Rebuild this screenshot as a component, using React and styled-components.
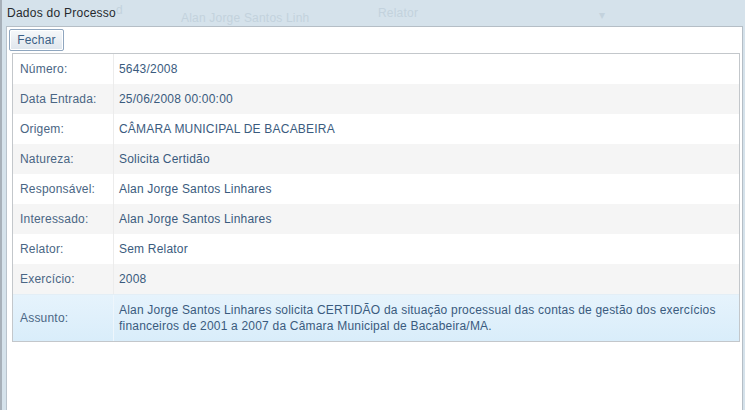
import React from "react";
import styled, { createGlobalStyle } from "styled-components";

const Global = createGlobalStyle`
  html, body { margin: 0; padding: 0; }
  body { font-family: "Liberation Sans", Arial, sans-serif; background: #fff; }
`;

const Window = styled.div`
  width: 745px;
  height: 410px;
  box-sizing: border-box;
  background: #d5e2eb;
  display: flex;
  flex-direction: column;
  border-left: 2px solid #a7b0b9;
  overflow: hidden;
`;

const Header = styled.div`
  height: 26px;
  flex: none;
  display: flex;
  align-items: center;
  padding-left: 5px;
  position: relative;
`;

const Title = styled.div`
  font-size: 12px;
  letter-spacing: 0.25px;
  color: #262a2e;
  position: relative;
  z-index: 1;
`;

const Ghost = styled.span`
  position: absolute;
  top: ${p => p.$top}px;
  left: ${p => p.$left}px;
  font-size: 12px;
  letter-spacing: 0.2px;
  color: #c3d2dd;
`;

const Body = styled.div`
  flex: 1;
  margin-left: 4px;
  margin-right: 2px;
  background: #fff;
  border-top: 1px solid #b5bec6;
  border-left: 1px solid #b9c3cc;
  border-right: 1px solid #b5bec6;
  padding: 2px 2px 0 2px;
  display: flex;
  flex-direction: column;
  align-items: flex-start;
`;

const Button = styled.button`
  width: 55px;
  height: 22px;
  border: 1px solid #8fa6bf;
  border-radius: 2px;
  background: linear-gradient(#f6f8fa, #dfe6ed);
  color: #3a5f86;
  font-family: "Liberation Sans", Arial, sans-serif;
  font-size: 12px;
  letter-spacing: 0.2px;
  padding: 0;
  box-shadow: inset 0 0 0 1px #fff;
`;

const Table = styled.div`
  margin-top: 2px;
  margin-left: 3px;
  align-self: stretch;
  border: 1px solid #c3c7cb;
  display: flex;
  flex-direction: column;
`;

const Row = styled.div`
  display: grid;
  grid-template-columns: 101px 1fr;
  min-height: 30px;
  background: ${p =>
    p.$selected
      ? "linear-gradient(#e6f3fc, #d9edfa)"
      : p.$alt
      ? "#f5f5f5"
      : "#fff"};
  font-size: 12px;
  letter-spacing: 0.2px;
  border-top: ${p => (p.$selected ? "1px solid #e3eef6" : "none")};
`;

const Label = styled.div`
  padding-left: 7px;
  display: flex;
  align-items: center;
  border-right: 1px solid ${p => (p.$selected ? "#eef6fc" : "#ececec")};
  color: #4a6684;
`;

const Value = styled.div`
  padding: 7px 8px 7px 5px;
  display: flex;
  align-items: center;
  line-height: 16px;
  color: #3a5b7e;
`;

const rows = [
  ["Número:", "5643/2008"],
  ["Data Entrada:", "25/06/2008 00:00:00"],
  ["Origem:", "CÂMARA MUNICIPAL DE BACABEIRA"],
  ["Natureza:", "Solicita Certidão"],
  ["Responsável:", "Alan Jorge Santos Linhares"],
  ["Interessado:", "Alan Jorge Santos Linhares"],
  ["Relator:", "Sem Relator"],
  ["Exercício:", "2008"],
];

export default function App() {
  return (
    <>
      <Global />
      <Window>
        <Header>
          <Title>Dados do Processo</Title>
          <Ghost $top={3} $left={114}>d</Ghost>
          <Ghost $top={11} $left={179}>Alan Jorge Santos Linh</Ghost>
          <Ghost $top={6} $left={376}>Relator</Ghost>
          <Ghost $top={8} $left={597}>▾</Ghost>
        </Header>
        <Body>
          <Button>Fechar</Button>
          <Table>
            {rows.map(([l, v], i) => (
              <Row key={l} $alt={i % 2 === 1}>
                <Label>{l}</Label>
                <Value>{v}</Value>
              </Row>
            ))}
            <Row $selected>
              <Label $selected>Assunto:</Label>
              <Value>
                Alan Jorge Santos Linhares solicita CERTIDÃO da situação processual das contas de gestão dos exercícios financeiros de 2001 a 2007 da Câmara Municipal de Bacabeira/MA.
              </Value>
            </Row>
          </Table>
        </Body>
      </Window>
    </>
  );
}
